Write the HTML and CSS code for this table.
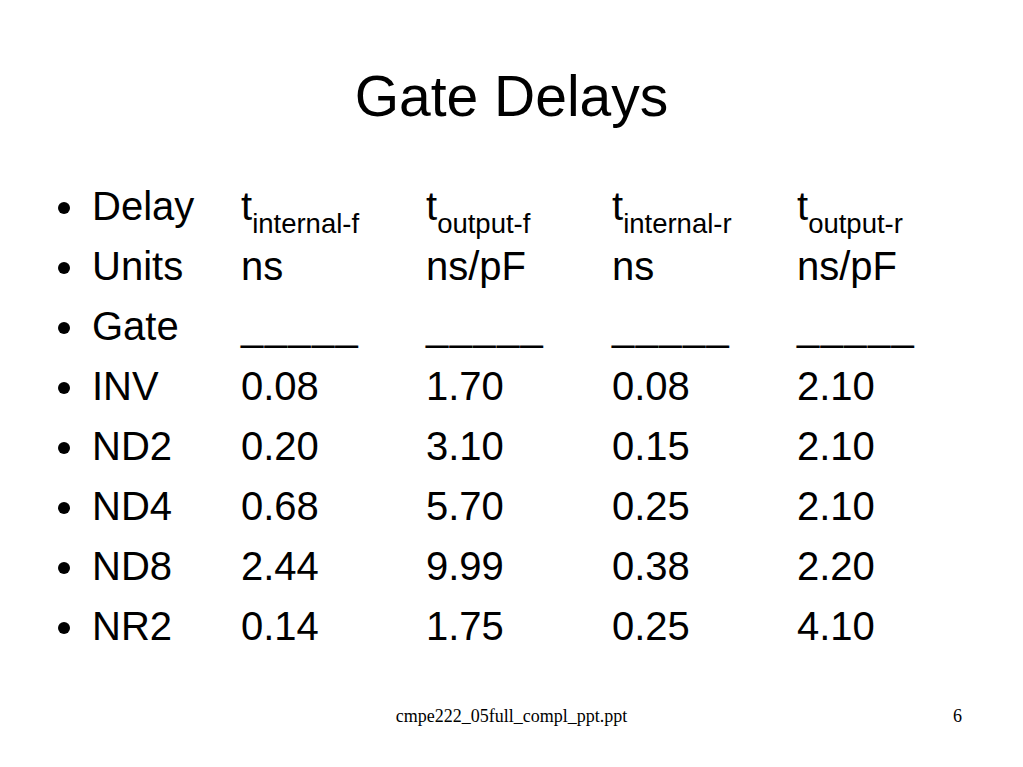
FILE: index.html
```html
<!DOCTYPE html>
<html lang="en">
<head>
<meta charset="utf-8">
<title>Gate Delays</title>
<link rel="stylesheet" href="styles.css">
</head>
<body>
<div class="slide">
  <h1 class="title">Gate Delays</h1>
  <ul class="rows">
    <li class="row"><span>Delay</span><span>t<sub>internal-f</sub></span><span>t<sub>output-f</sub></span><span>t<sub>internal-r</sub></span><span>t<sub>output-r</sub></span></li>
    <li class="row"><span>Units</span><span>ns</span><span>ns/pF</span><span>ns</span><span>ns/pF</span></li>
    <li class="row"><span>Gate</span><span class="rule">_____</span><span class="rule">_____</span><span class="rule">_____</span><span class="rule">_____</span></li>
    <li class="row"><span>INV</span><span>0.08</span><span>1.70</span><span>0.08</span><span>2.10</span></li>
    <li class="row"><span>ND2</span><span>0.20</span><span>3.10</span><span>0.15</span><span>2.10</span></li>
    <li class="row"><span>ND4</span><span>0.68</span><span>5.70</span><span>0.25</span><span>2.10</span></li>
    <li class="row"><span>ND8</span><span>2.44</span><span>9.99</span><span>0.38</span><span>2.20</span></li>
    <li class="row"><span>NR2</span><span>0.14</span><span>1.75</span><span>0.25</span><span>4.10</span></li>
  </ul>
  <div class="footer">
    <span class="footer-name">cmpe222_05full_compl_ppt.ppt</span>
    <span class="footer-num">6</span>
  </div>
</div>
</body>
</html>
```
FILE: styles.css
```css
html, body {
  margin: 0;
  padding: 0;
  background: #ffffff;
}

.slide {
  width: 1023px;
  height: 767px;
  display: flex;
  flex-direction: column;
  font-family: "Liberation Sans", Arial, sans-serif;
  color: #000000;
  overflow: hidden;
}

.title {
  margin: 64px 0 0 0;
  font-size: 57px;
  font-weight: normal;
  line-height: 64px;
  text-align: center;
}

.rows {
  list-style: none;
  margin: 48px 0 0 0;
  padding: 0 0 0 92px;
}

.row {
  position: relative;
  display: grid;
  grid-template-columns: 149px 185px 186px 185px auto;
  font-size: 40px;
  line-height: 60px;
  height: 60px;
  white-space: nowrap;
}

.row::before {
  content: "";
  position: absolute;
  left: -34px;
  top: 26px;
  width: 12px;
  height: 12px;
  border-radius: 50%;
  background: #000000;
}

.row sub {
  font-size: 27.5px;
  line-height: 0;
  vertical-align: -13px;
}

.rule {
  letter-spacing: 1.4px;
}

.footer {
  position: relative;
  margin-top: 50px;
  height: 20px;
  line-height: 20px;
  font-family: "Liberation Serif", "Times New Roman", serif;
  font-size: 18px;
  text-align: center;
}

.footer-num {
  position: absolute;
  right: 61px;
  top: 0;
}
```
